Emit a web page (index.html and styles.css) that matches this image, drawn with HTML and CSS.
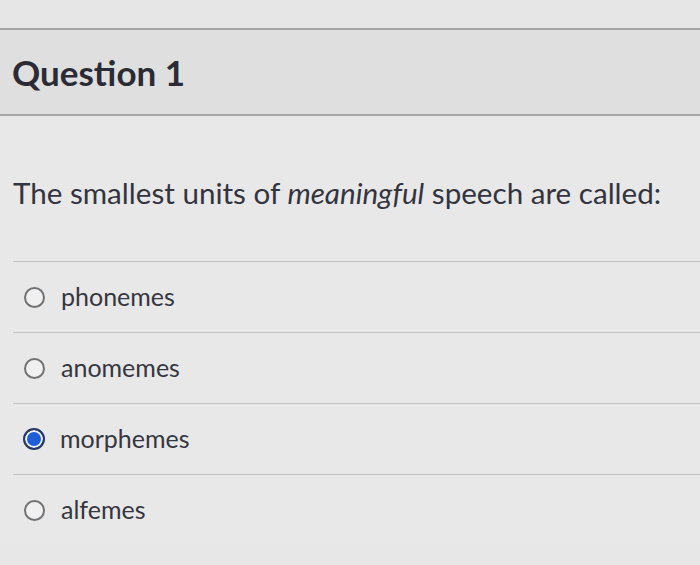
FILE: index.html
```html
<!DOCTYPE html>
<html lang="en">
<head>
<meta charset="utf-8">
<title>Question 1</title>
<link rel="stylesheet" href="styles.css">
</head>
<body>
<div class="page">
  <div class="topstrip"></div>
  <div class="qheader"><h2 class="qtitle">Question 1</h2></div>
  <div class="qbody">
    <p class="qtext">The smallest units of <em>meaningful</em> speech are called:</p>
    <ul class="answers">
      <li class="answer"><span class="radio"></span><span class="label">phonemes</span></li>
      <li class="answer"><span class="radio"></span><span class="label">anomemes</span></li>
      <li class="answer"><span class="radio selected"></span><span class="label">morphemes</span></li>
      <li class="answer"><span class="radio"></span><span class="label">alfemes</span></li>
    </ul>
  </div>
</div>
</body>
</html>
```
FILE: styles.css
```css
html, body {
  margin: 0;
  padding: 0;
}
body {
  width: 700px;
  height: 565px;
  overflow: hidden;
  background: #e7e7e7;
  font-family: Lato, "Open Sans", sans-serif;
  color: #35353f;
}
.page {
  display: flex;
  flex-direction: column;
}
.topstrip {
  height: 28px;
  background: #e6e6e6;
  border-bottom: 2px solid #a3a3a3;
}
.qheader {
  height: 84px;
  background: #dfdfdf;
  border-bottom: 2px solid #a6a6a6;
  display: flex;
  align-items: center;
  padding-left: 12px;
}
.qtitle {
  margin: 0;
  font-size: 35px;
  font-weight: 700;
  color: #2b2b36;
  line-height: 40px;
}
.qbody {
  background: #e8e8e8;
  padding-left: 13px;
}
.qtext {
  margin: 0;
  padding: 58px 0 49px 0;
  font-size: 29.6px;
  line-height: 38px;
  color: #34343f;
}
.qtext em {
  font-style: italic;
}
.answers {
  list-style: none;
  margin: 0;
  padding: 0;
}
.answer {
  height: 70px;
  border-top: 1px solid #c2c2c2;
  display: flex;
  align-items: center;
  padding-left: 11px;
  gap: 16px;
}
.radio {
  width: 17px;
  height: 17px;
  border: 2px solid #727276;
  border-radius: 50%;
  background: #f0f0f0;
  flex: none;
}
.radio.selected {
  width: 18px;
  height: 18px;
  margin-left: -1px;
  margin-right: -1px;
  border: 2px solid #263766;
  background: #1e5ed8;
  box-shadow: inset 0 0 0 2px #f2f4f8;
}
.label {
  font-size: 25px;
  line-height: 30px;
  color: #363640;
  padding-bottom: 3px;
}
```
